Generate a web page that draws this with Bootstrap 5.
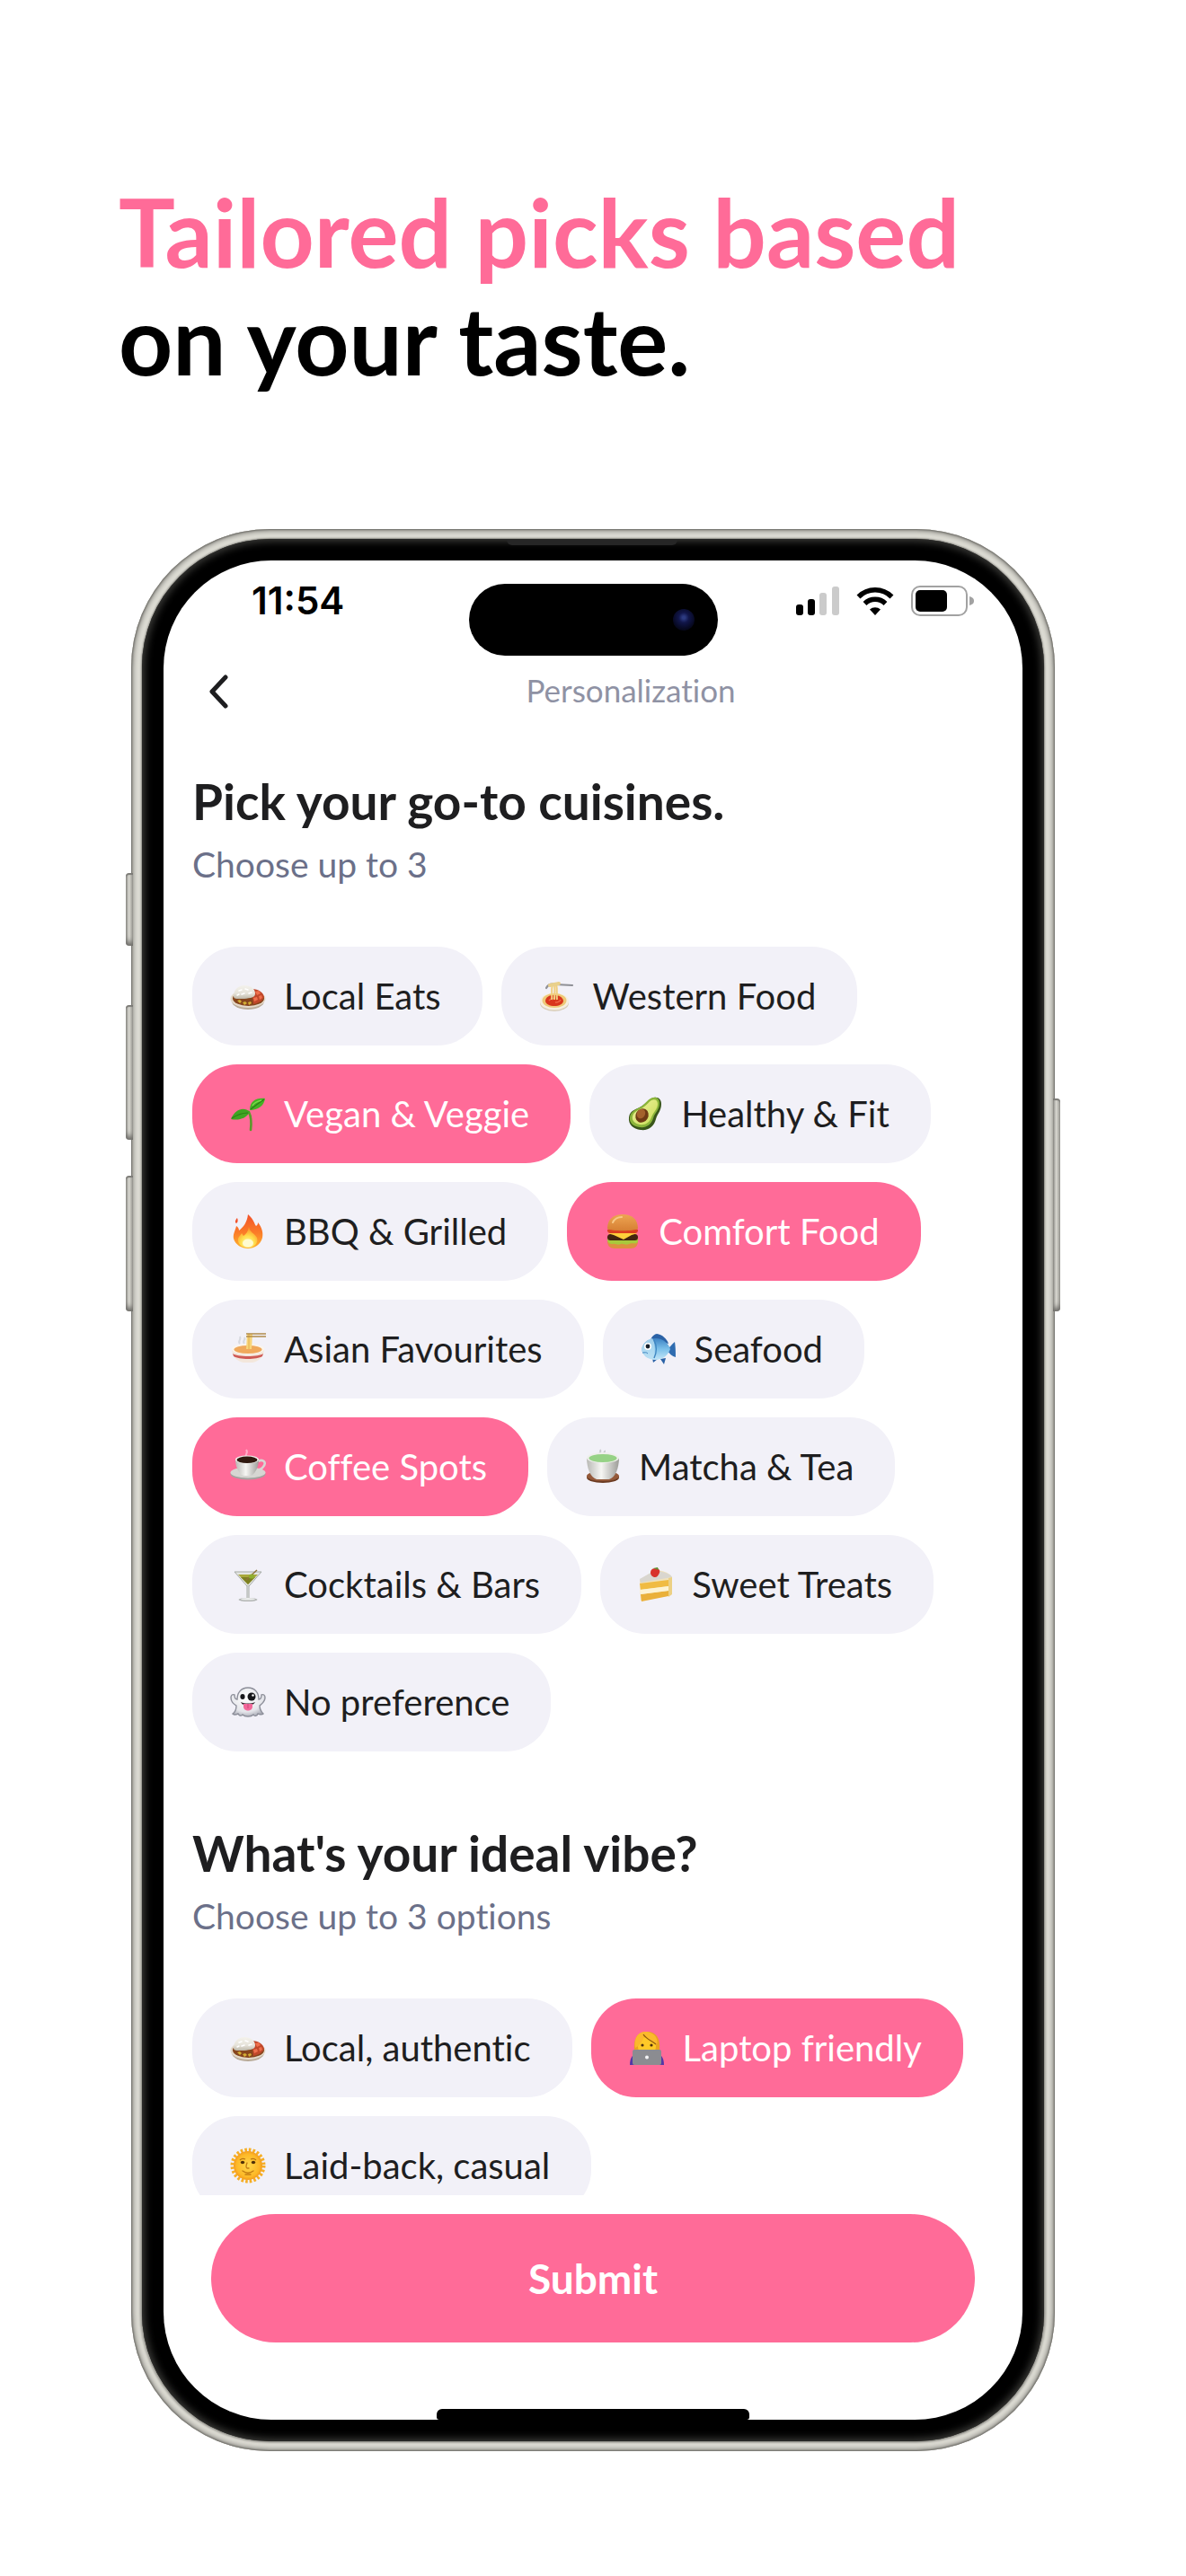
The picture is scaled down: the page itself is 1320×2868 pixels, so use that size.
<!DOCTYPE html>
<html lang="en">
<head>
<meta charset="utf-8">
<meta name="viewport" content="width=device-width, initial-scale=1">
<title>Tailored picks based on your taste</title>
<link href="https://cdn.jsdelivr.net/npm/bootstrap@5.3.0/dist/css/bootstrap.min.css" rel="stylesheet">
<script src="https://cdn.jsdelivr.net/npm/bootstrap@5.3.0/dist/js/bootstrap.bundle.min.js"></script>
<style>
  :root { --pink: #ff6b98; --ink: #1e1e20; --slate: #6b7089; --chip: #f2f1f8; }
  body { font-family: Lato, "Open Sans", sans-serif; font-variant-ligatures: none; background: #fff; color: var(--ink); }
  .promo { padding: 197px 0 139px; }
  .promo-title { font-size: 105px; line-height: 120px; font-weight: 700; color: #000; padding: 0 132px; margin-bottom: 152px; }
  .promo-title span { color: var(--pink); }

  /* phone shell */
  .phone { max-width: 1028px; aspect-ratio: 1028 / 2140; padding: 11px 12px; border-radius: 154px;
    background: linear-gradient(180deg, #dddcd4 0%, #d3d2c8 60%, #b9b8b1 100%);
    box-shadow: inset 0 0 2px 1px #6f6e69, inset 0 0 5px 3px #9b9a94, inset 0 0 2px 9px #dddcd4; }
  .bezel { padding: 24px; border-radius: 143px; background: #000; box-shadow: inset 0 0 9px 3px #3b3b38, 0 0 2px 1px #8a8983; }
  .screen { border-radius: 120px; background: #fff; overflow: hidden; }
  .earpiece { top: 12px; left: 50%; width: 190px; height: 6px; margin-left: -96px; background: #262626; border-radius: 0 0 6px 6px; }
  .side-key { width: 8px; left: -6px; background: linear-gradient(90deg, #8d8c87, #d9d8d1 45%, #9a9993);
    border-radius: 4px 0 0 4px; box-shadow: inset 0 -8px 6px -4px #6c6b67, inset 0 2px 1px #7c7b77; z-index: -1; }
  .side-key-action { top: 383px; height: 81px; }
  .side-key-up { top: 530px; height: 150px; }
  .side-key-down { top: 720px; height: 151px; }
  .side-key-power { top: 634px; height: 237px; left: auto; right: -6px; border-radius: 0 4px 4px 0; }

  /* status bar and header */
  .status { display: grid; grid-template-columns: 1fr auto 1fr; padding: 26px 54px 0 98px; }
  .clock { font: 600 42px/38px Inter, sans-serif; color: #000; }
  .island { width: 277px; height: 80px; border-radius: 40px; background: #000; margin-left: -44px; }
  .lens { width: 24px; height: 24px; margin-right: 26px; border-radius: 50%; background: radial-gradient(circle at 50% 40%, #2c3a80 0 8%, #11164a 30%, #070922 65%, #020207 100%); }
  .status-icons { height: 38px; gap: 19px; }
  .topbar { margin-top: 16px; height: 48px; }
  .back { width: 84px; padding: 0 12px 0 0; line-height: 1; }
  .topbar-title { font-size: 35px; line-height: 42px; color: #8f92a4; padding-bottom: 4px; }

  /* form */
  .scroll-area { flex: 1 1 0; min-height: 0; overflow: hidden; padding: 66px 32px 0; }
  .quiz { padding: 0; margin: 0 0 81px; }
  .quiz-title { font-size: 55px; line-height: 64px; font-weight: 700; margin: 0 0 14px; }
  .quiz-hint { font-size: 39px; line-height: 48px; color: var(--slate); margin: 0 0 68px; }
  .chips { gap: 21px; }
  .chip { --bs-btn-bg: var(--chip); --bs-btn-color: var(--ink); --bs-btn-active-bg: var(--pink); --bs-btn-active-color: #fff;
    --bs-btn-hover-bg: #e8e6f2; --bs-btn-border-width: 0; --bs-btn-font-size: 40px; --bs-btn-line-height: 60px;
    --bs-btn-border-radius: 50px; --bs-btn-padding-y: 25px; padding-left: 42px; padding-right: 46px; gap: 20px; }
  .chip svg { width: 40px; height: 40px; flex: none; }
  .footer-bar { padding: 21px 53px 0; }
  .submit { --bs-btn-bg: var(--pink); --bs-btn-color: #fff; --bs-btn-hover-bg: #f2588a; --bs-btn-hover-color: #fff;
    --bs-btn-border-width: 0; --bs-btn-font-size: 46px; --bs-btn-line-height: 71px; --bs-btn-padding-y: 36px; --bs-btn-font-weight: 700; }
  .home-bar { width: 348px; height: 12px; margin: 74px auto 0; border-radius: 6px 6px 3px 3px; background: #000; }
</style>
</head>
<body>
<svg width="0" height="0" class="d-block" aria-hidden="true">
  <defs>
    <linearGradient id="gFlame" x1="0" y1="0" x2="0" y2="1"><stop offset="0" stop-color="#f2512a"/><stop offset=".55" stop-color="#fb7d28"/><stop offset="1" stop-color="#ffb52e"/></linearGradient>
    <radialGradient id="gFlameIn" cx=".5" cy=".8" r=".7"><stop offset="0" stop-color="#fff7b0"/><stop offset=".5" stop-color="#ffdf4d"/><stop offset="1" stop-color="#fb9a2b"/></radialGradient>
    <linearGradient id="gBun" x1="0" y1="0" x2="0" y2="1"><stop offset="0" stop-color="#eda552"/><stop offset="1" stop-color="#d67f33"/></linearGradient>
    <radialGradient id="gSun"><stop offset="0" stop-color="#ffd84a"/><stop offset=".8" stop-color="#fdb827"/><stop offset="1" stop-color="#f39a1d"/></radialGradient>
    <linearGradient id="gCup" x1="0" y1="0" x2="1" y2="0"><stop offset="0" stop-color="#b9b9b5"/><stop offset=".45" stop-color="#f6f6f3"/><stop offset="1" stop-color="#9c9c98"/></linearGradient>
    <linearGradient id="gFish" x1="0" y1="0" x2="0" y2="1"><stop offset="0" stop-color="#3d83c4"/><stop offset=".5" stop-color="#7cc0ea"/><stop offset="1" stop-color="#c3e6f7"/></linearGradient>
    <radialGradient id="gGhost" cx=".45" cy=".35" r=".7"><stop offset="0" stop-color="#fff"/><stop offset=".7" stop-color="#e4e5ea"/><stop offset="1" stop-color="#a5a7b2"/></radialGradient>
    <linearGradient id="gAvo" x1="0" y1="0" x2="1" y2="1"><stop offset="0" stop-color="#f1f3a0"/><stop offset="1" stop-color="#c9dc55"/></linearGradient>
    <linearGradient id="gRice" x1="0" y1="0" x2="0" y2="1"><stop offset="0" stop-color="#f4f2ec"/><stop offset=".6" stop-color="#e6e3da"/><stop offset="1" stop-color="#bdb7a8"/></linearGradient>
  </defs>
  <symbol id="i-curry" viewBox="0 0 40 40">
    <ellipse cx="20" cy="25.500" rx="18" ry="9.500" fill="#b9ab99"/><ellipse cx="20" cy="23" rx="19.500" ry="10" fill="#e4d9c9"/>
    <ellipse cx="20.500" cy="22.500" rx="17.500" ry="8.500" fill="#86451d"/>
    <path d="M24 12c8 0 13 4 14 9-2 5-7 7-12 8z" fill="#c0472a"/>
    <path d="M28 15l4-1 2 3-4 2zM32 20l3-1 1 3-3 2zM26 22l4-1 1 3-4 2z" fill="#ee6f4c"/>
    <path d="M8 25l3-1 2 2-2 2zM14 27l3-1 2 2-3 2zM20 27l3-1 1 2-3 2z" fill="#d3ae35"/>
    <path d="M4 20c0-7 5-12 12-12s12 4 12 9c0 5-5 5-12 6-7 0-12 1-12-3z" fill="url(#gRice)"/>
    <path d="M10 14l3-1M17 12l3 1M13 18l3-1M21 17l3-1M8 19l2-1" stroke="#fff" stroke-width="1.500" stroke-linecap="round"/>
  </symbol>
  <symbol id="i-pasta" viewBox="0 0 40 40">
    <ellipse cx="17" cy="28" rx="16" ry="9" fill="#d8cdb9"/><ellipse cx="17" cy="26" rx="16" ry="9.500" fill="#f6efdf"/>
    <ellipse cx="17" cy="25" rx="13.500" ry="8" fill="#eec978"/><path d="M7 25c1-5 5-6 10-6s9 2 10 6c0 4-5 6-10 6s-10-2-10-6z" fill="#d9361c"/>
    <path d="M11 25c2-3 5-2 7-3M18 27c3 0 5-1 6-3" stroke="#f0694a" stroke-width="1.500" fill="none"/>
    <path d="M14 24c1-5-1-10 1-17M17 24c0-6 1-11 0-17M20 24c-1-6 1-11-1-17" stroke="#f0cf80" stroke-width="2" fill="none"/>
    <path d="M8 11c2-4 6-5 10-4l19 1" stroke="#8f9096" stroke-width="2.200" fill="none" stroke-linecap="round"/><path d="M12 8l10-2" stroke="#e9d08c" stroke-width="4" stroke-linecap="round"/>
  </symbol>
  <symbol id="i-sprout" viewBox="0 0 40 40">
    <path d="M23 38c1-8 1-14-2-20" stroke="#5a9a2a" stroke-width="2.600" fill="none" stroke-linecap="round"/>
    <path d="M22 16C22 6 29 2 39 3c-1 8-8 13-17 13z" fill="#43b324"/><path d="M22 18C16 12 6 14 1 26c9 2 17-1 21-8z" fill="#3ea522"/>
    <path d="M23 15C28 11 32 8 38 4M20 19C14 19 8 21 2 25" stroke="#2c7c17" stroke-width="1.200" fill="none"/>
    <path d="M25 11c2-4 6-5 10-6" stroke="#7dd94a" stroke-width="1.500" fill="none"/>
  </symbol>
  <symbol id="i-avocado" viewBox="0 0 40 40">
    <path d="M27 3c6-3 11 0 11 6 0 8-4 10-6 17-2 8-8 13-17 12C7 37 1 32 2 24 3 15 12 15 17 11c4-3 6-6 10-8z" fill="#39561a"/>
    <path d="M26 3c6-3 10 0 10 5 0 8-5 10-7 17-2 7-8 11-15 10C7 34 2 30 3 24c1-8 9-9 14-13 4-3 5-6 9-8z" fill="#8bb53a"/>
    <path d="M27 5c4-2 7 0 7 4 0 6-5 9-7 15-2 6-7 9-13 8-5-1-9-4-8-9 1-6 8-7 13-11 4-3 5-5 8-7z" fill="url(#gAvo)"/>
    <ellipse cx="16.500" cy="22" rx="7" ry="8" transform="rotate(30 16.500 22)" fill="#6f3b14"/><ellipse cx="15.500" cy="20" rx="4.500" ry="5.500" transform="rotate(30 15.500 20)" fill="#a4622c"/>
  </symbol>
  <symbol id="i-flame" viewBox="0 0 40 40">
    <path d="M20 1c7 6 7 11 9 13 2-1 2-3 2-4 5 6 6 12 5 17-2 8-9 12-16 12S6 35 4 28c-1-5 2-9 3-14 2 1 3 3 3 5 5-4 9-9 10-18z" fill="url(#gFlame)"/>
    <path d="M7 11c-2-1-1-4 1-6 1 2 1 5-1 6z" fill="#f2512a"/>
    <path d="M21 15c1 6 6 7 9 12 2 6-3 11-10 11S8 34 9 28c1-3 3-4 4-6 1 1 1 2 2 3 3-2 5-5 6-10z" fill="url(#gFlameIn)"/>
    <ellipse cx="20" cy="33" rx="6" ry="4.500" fill="#fffbd0"/>
  </symbol>
  <symbol id="i-burger" viewBox="0 0 40 40">
    <path d="M3 31h34c0 5-3 8-8 8H11c-5 0-8-3-8-8z" fill="#dd9040"/><path d="M3 28c3-2 31-2 34 0v4c-4 3-7 0-10 2-4 2-6-1-9 0-4 2-6-1-9 0-3 0-6-1-6-5z" fill="#a8c93c"/>
    <rect x="3" y="23" width="34" height="7" rx="3.500" fill="#43240f"/>
    <path d="M3 22h34l-7 2-9 5-11-5z" fill="#ffcf3a"/><path d="M3 18c4-2 30-2 34 0 0 3-1 4-4 4H7c-3 0-4-1-4-4z" fill="#dc3f20"/>
    <path d="M3 17C3 6 10 1 20 1s17 5 17 16c-4 3-30 3-34 0z" fill="url(#gBun)"/><path d="M9 10c2-4 6-6 10-6" stroke="#f8c987" stroke-width="2" fill="none" stroke-linecap="round"/>
  </symbol>
  <symbol id="i-ramen" viewBox="0 0 40 40">
    <path d="M11 14c-3-3 2-4 0-8M16 14c-3-3 2-4 0-7" stroke="#d7d9df" stroke-width="2" fill="none"/>
    <path d="M2 20h36c0 9-7 14-13 15H15C9 34 2 29 2 20z" fill="#f3e7dc"/><path d="M3 25c5 4 29 4 34 0l-1 3c-6 4-26 4-32 0z" fill="#cf5a55"/>
    <ellipse cx="20" cy="20" rx="18" ry="6" fill="#fbf5ec"/><ellipse cx="20" cy="20.500" rx="15.500" ry="4.500" fill="#f0a95c"/>
    <path d="M19 3h6l-1 17h-6z" fill="#f8d67c"/><path d="M21 3v17" stroke="#e2b14e"/>
    <path d="M18 3h22M18 6h22" stroke="#b08a4b" stroke-width="1.600"/>
  </symbol>
  <symbol id="i-fish" viewBox="0 0 40 40">
    <path d="M11 10c1-4 5-7 7-7 6 1 11 5 13 11z" fill="#2b62a6"/><path d="M29 21c3-2 6-7 9-9 1 6 1 13 1 17-4-1-7-4-10-8z" fill="#2f6cb0"/>
    <path d="M22 31l4 6 2-7zM13 30l1 5 5-4z" fill="#2b62a6"/>
    <path d="M1 20C3 12 9 8 17 8s14 6 16 12c-3 8-9 12-17 12C8 32 2 27 1 20z" fill="url(#gFish)"/>
    <path d="M1 20C3 13 8 9 13 8c3 5 4 13 1 23C7 30 2 26 1 20z" fill="#b9def3" opacity=".8"/><path d="M15 10c3 6 3 14 0 20" stroke="#3f86c1" stroke-width="1.500" fill="none"/>
    <circle cx="8" cy="17" r="4" fill="#fff"/><circle cx="8" cy="17" r="2.400" fill="#16202c"/><path d="M2 24c3 0 4-1 6 1" stroke="#3f86c1" fill="none"/>
  </symbol>
  <symbol id="i-coffee" viewBox="0 0 40 40">
    <path d="M18 9c-2-3 3-4 0-8" stroke="#fff" stroke-opacity=".45" stroke-width="2" fill="none"/>
    <ellipse cx="20" cy="28" rx="19.500" ry="6.500" fill="#a3a39f"/><ellipse cx="20" cy="26.500" rx="19.500" ry="6" fill="#d6d6d2"/>
    <path d="M31 14c6-3 10 1 6 6-2 3-5 4-9 4" fill="none" stroke="#d7d7d3" stroke-width="2.500"/>
    <path d="M6 12h26c0 9-5 17-9 18h-8C11 29 6 21 6 12z" fill="url(#gCup)"/><ellipse cx="19" cy="12" rx="13" ry="4.500" fill="#f2f2ee"/><ellipse cx="19" cy="12.300" rx="11.500" ry="3.700" fill="#301a10"/>
  </symbol>
  <symbol id="i-tea" viewBox="0 0 40 40">
    <path d="M16 8c-2-3 3-3 1-7M21 7c-2-2 2-3 1-5" stroke="#c9cbce" stroke-width="2" fill="none"/>
    <ellipse cx="20" cy="32" rx="18" ry="6" fill="#6b3b22"/><ellipse cx="20" cy="30.500" rx="18" ry="5.500" fill="#94593a"/>
    <path d="M2 10h36c0 11-4 22-11 24H13C6 32 2 21 2 10z" fill="url(#gCup)"/><ellipse cx="20" cy="10" rx="18" ry="6" fill="#efefec"/><ellipse cx="20" cy="10.500" rx="15.500" ry="4.600" fill="#96d286"/>
  </symbol>
  <symbol id="i-cocktail" viewBox="0 0 40 40">
    <path d="M5 6h30L21 22v13h-2V22z" fill="#e4e6e3" stroke="#a5a9a5" stroke-width="1"/>
    <path d="M9 9h22L20 20z" fill="#a9a83b"/><path d="M12 12h16l-8 8z" fill="#7d8021"/>
    <path d="M19 21h2v15h-2z" fill="#c4c7c5"/><ellipse cx="20" cy="37" rx="10.500" ry="2" fill="#b4b7b5"/><ellipse cx="20" cy="36.300" rx="8" ry="1.200" fill="#eceeed"/>
    <path d="M30 4L18 15" stroke="#90743a" stroke-width="1.500"/><ellipse cx="24" cy="11" rx="3.200" ry="2.600" fill="#8fae2f"/>
  </symbol>
  <symbol id="i-cake" viewBox="0 0 40 40">
    <path d="M2 15L19 4c9 0 17 4 19 8v19L3 38z" fill="#f0e2bb"/><path d="M2 14L18 5c9 0 18 3 20 7L3 18z" fill="#d9d6cf"/>
    <path d="M2 19l32-4v7L3 26z" fill="#f0bb43"/><path d="M3 31l31-4v6L4 39z" fill="#eab03a"/><path d="M2 26l32-4v5L3 31z" fill="#fdf3d3"/>
    <path d="M34 13l4-1v19l-4 3z" fill="#ecd084"/>
    <path d="M14 7c0-4 3-5 6-5s5 2 4 5-3 5-5 5-5-2-5-5z" fill="#d8322b"/><path d="M17 2l5-1 1 3z" fill="#5c9232"/>
  </symbol>
  <symbol id="i-ghost" viewBox="0 0 40 40">
    <path d="M20 4c8 0 12 6 12 13 2 0 3-2 3-5 2-1 4 0 4 3 0 5-4 7-6 9 0 5 2 7 4 9-2 2-5 0-6 0-1 3-4 3-5 1-2 2-4 2-6 2s-4 0-6-2c-2 2-4 1-5-1-2 1-4 2-6 0 3-2 4-5 4-9-3-2-6-4-6-9 0-3 2-4 4-3 0 3 1 5 3 5C8 10 12 4 20 4z" fill="url(#gGhost)" stroke="#8d8f9a" stroke-width="1.400"/>
    <ellipse cx="14" cy="14" rx="2.600" ry="3" fill="#17171b"/><circle cx="24" cy="14" r="4.500" fill="#17171b"/><circle cx="25.500" cy="12.500" r="1.200" fill="#fff"/>
    <path d="M12 20c5 2 11 2 16 0-1 2-3 3-4 3h-8c-2 0-3-1-4-3z" fill="#33232c"/><path d="M15 22h10v3c0 6-10 6-10 0z" fill="#f2689a"/><path d="M20 22v5" stroke="#cf4478"/>
  </symbol>
  <symbol id="i-laptop" viewBox="0 0 40 40">
    <path d="M6 22C5 10 9 2 20 2s15 8 14 20z" fill="#e9a321"/><path d="M10 18c0-7 4-10 10-10s10 3 10 10-5 11-10 11-10-4-10-11z" fill="#ffc928"/>
    <path d="M17 6c3 4 8 6 14 10 2-5-2-13-11-14S5 8 7 20c5-2 9-8 10-14z" fill="#fbb92d"/><path d="M16 5c3 5 9 7 14 11" stroke="#8f5a10" stroke-width="1.300" fill="none"/>
    <circle cx="15" cy="17" r="1.600" fill="#4a2c10"/><circle cx="25" cy="17" r="1.600" fill="#4a2c10"/>
    <path d="M1 39c0-9 4-12 8-13h22c4 1 8 4 8 13z" fill="#5137a6"/><rect x="4" y="22" width="32" height="17" rx="2" fill="#8b8c91"/><circle cx="20" cy="30.500" r="2" fill="#f4f4f6"/>
  </symbol>
  <symbol id="i-sun" viewBox="0 0 40 40">
    <circle cx="20" cy="20" r="17.500" fill="none" stroke="#f6ae25" stroke-width="4" stroke-dasharray="2.600 2"/>
    <circle cx="20" cy="20" r="16" fill="url(#gSun)"/>
    <path d="M11 14c2-2 4-2 6-1M23 13c2-1 4-1 6 1" stroke="#b87312" stroke-width="1.300" fill="none"/><ellipse cx="14" cy="16.500" rx="2.200" ry="1.800" fill="#4f3109"/><ellipse cx="26" cy="16.500" rx="2.200" ry="1.800" fill="#4f3109"/>
    <path d="M19 17c-1 3-2 5 0 6h2M14 26c4 3 8 3 12 0M17 30h6" stroke="#c27c13" stroke-width="1.300" fill="none" stroke-linecap="round"/>
  </symbol>
</svg>

<main class="promo">
  <h1 class="promo-title"><span>Tailored picks based</span><br>on your taste.</h1>

  <div class="phone position-relative mx-auto d-flex z-0">
    <div class="side-key side-key-action position-absolute"></div>
    <div class="side-key side-key-up position-absolute"></div>
    <div class="side-key side-key-down position-absolute"></div>
    <div class="side-key side-key-power position-absolute"></div>
    <div class="earpiece position-absolute"></div>
    <div class="bezel flex-fill d-flex">
      <div class="screen flex-fill d-flex flex-column">
        <div class="status">
          <div class="clock">11:54</div>
          <div class="island d-flex align-items-center justify-content-end"><div class="lens"></div></div>
          <div class="status-icons d-flex align-items-center justify-content-end">
            <svg width="48" height="32" viewBox="0 0 48 32" aria-label="Signal" role="img"><rect y="20" width="8" height="12" rx="3"/><rect x="13" y="14" width="8" height="18" rx="3"/><g fill="#cbcbcb"><rect x="26" y="7" width="8" height="25" rx="3"/><rect x="40" width="8" height="32" rx="3"/></g></svg>
            <svg width="42" height="32" viewBox="0 0 42 32" aria-label="Wi-Fi" role="img"><g fill="none" stroke="#000" stroke-width="5.500"><path d="M2.500 11.500a26 26 0 0 1 37 0"/><path d="M9.500 19a16.500 16.500 0 0 1 23 0"/></g><path d="M21 32l-6-6.500a9 9 0 0 1 12 0z"/></svg>
            <svg width="70" height="34" viewBox="0 0 70 34" aria-label="Battery" role="img"><rect x="1" y="1" width="61" height="32" rx="9" fill="none" stroke="#a2a2a2" stroke-width="2"/><rect x="5" y="5" width="35" height="24" rx="5"/><path d="M65 12c4 1 5 3 5 5s-1 4-5 5z" fill="#a2a2a2"/></svg>
          </div>
        </div>

        <header class="topbar d-flex align-items-center">
          <button type="button" class="back btn border-0 text-end" aria-label="Back"><svg width="22" height="38" viewBox="0 0 22 38"><path d="M19 3L4 19l15 16" fill="none" stroke="#1e1e20" stroke-width="5" stroke-linecap="round" stroke-linejoin="round"/></svg></button>
          <div class="topbar-title flex-fill text-center">Personalization</div>
        </header>

        <form class="scroll-area" id="prefs">
          <fieldset class="quiz">
            <legend class="quiz-title">Pick your go-to cuisines.</legend>
            <p class="quiz-hint">Choose up to 3</p>
            <div class="chips d-flex flex-wrap">
              <input class="btn-check" type="checkbox" id="c1"><label class="chip btn d-inline-flex align-items-center" for="c1"><svg><use href="#i-curry"/></svg>Local Eats</label>
              <input class="btn-check" type="checkbox" id="c2"><label class="chip btn d-inline-flex align-items-center" for="c2"><svg><use href="#i-pasta"/></svg>Western Food</label>
              <input class="btn-check" type="checkbox" id="c3" checked><label class="chip btn d-inline-flex align-items-center" for="c3"><svg><use href="#i-sprout"/></svg>Vegan &amp; Veggie</label>
              <input class="btn-check" type="checkbox" id="c4"><label class="chip btn d-inline-flex align-items-center" for="c4"><svg><use href="#i-avocado"/></svg>Healthy &amp; Fit</label>
              <input class="btn-check" type="checkbox" id="c5"><label class="chip btn d-inline-flex align-items-center" for="c5"><svg><use href="#i-flame"/></svg>BBQ &amp; Grilled</label>
              <input class="btn-check" type="checkbox" id="c6" checked><label class="chip btn d-inline-flex align-items-center" for="c6"><svg><use href="#i-burger"/></svg>Comfort Food</label>
              <input class="btn-check" type="checkbox" id="c7"><label class="chip btn d-inline-flex align-items-center" for="c7"><svg><use href="#i-ramen"/></svg>Asian Favourites</label>
              <input class="btn-check" type="checkbox" id="c8"><label class="chip btn d-inline-flex align-items-center" for="c8"><svg><use href="#i-fish"/></svg>Seafood</label>
              <input class="btn-check" type="checkbox" id="c9" checked><label class="chip btn d-inline-flex align-items-center" for="c9"><svg><use href="#i-coffee"/></svg>Coffee Spots</label>
              <input class="btn-check" type="checkbox" id="c10"><label class="chip btn d-inline-flex align-items-center" for="c10"><svg><use href="#i-tea"/></svg>Matcha &amp; Tea</label>
              <input class="btn-check" type="checkbox" id="c11"><label class="chip btn d-inline-flex align-items-center" for="c11"><svg><use href="#i-cocktail"/></svg>Cocktails &amp; Bars</label>
              <input class="btn-check" type="checkbox" id="c12"><label class="chip btn d-inline-flex align-items-center" for="c12"><svg><use href="#i-cake"/></svg>Sweet Treats</label>
              <input class="btn-check" type="checkbox" id="c13"><label class="chip btn d-inline-flex align-items-center" for="c13"><svg><use href="#i-ghost"/></svg>No preference</label>
            </div>
          </fieldset>
          <fieldset class="quiz">
            <legend class="quiz-title">What's your ideal vibe?</legend>
            <p class="quiz-hint">Choose up to 3 options</p>
            <div class="chips d-flex flex-wrap">
              <input class="btn-check" type="checkbox" id="v1"><label class="chip btn d-inline-flex align-items-center" for="v1"><svg><use href="#i-curry"/></svg>Local, authentic</label>
              <input class="btn-check" type="checkbox" id="v2" checked><label class="chip btn d-inline-flex align-items-center" for="v2"><svg><use href="#i-laptop"/></svg>Laptop friendly</label>
              <input class="btn-check" type="checkbox" id="v3"><label class="chip btn d-inline-flex align-items-center" for="v3"><svg><use href="#i-sun"/></svg>Laid-back, casual</label>
            </div>
          </fieldset>
        </form>

        <footer class="footer-bar">
          <button type="submit" form="prefs" class="submit btn rounded-pill w-100">Submit</button>
        </footer>
        <div class="home-bar"></div>
      </div>
    </div>
  </div>
</main>
</body>
</html>
